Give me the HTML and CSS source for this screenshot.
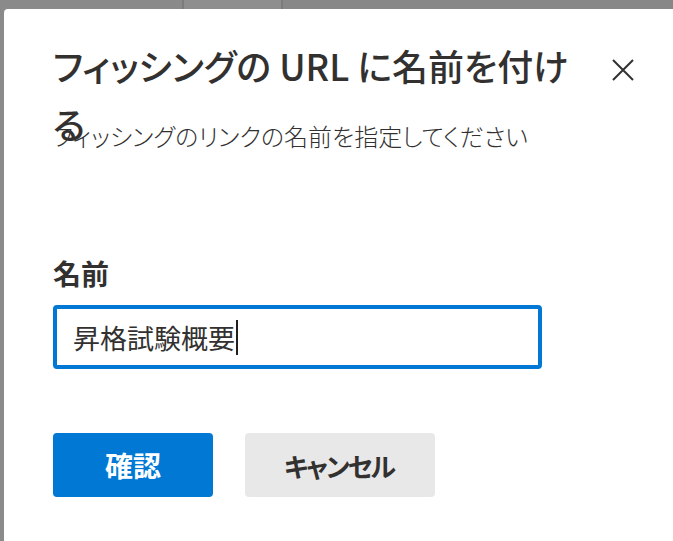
FILE: index.html
```html
<!DOCTYPE html>
<html lang="ja">
<head>
<meta charset="utf-8">
<title>フィッシングの URL に名前を付ける</title>
<link rel="stylesheet" href="styles.css">
</head>
<body>
<div class="topbar">
  <div class="seg seg1"></div>
  <div class="seg seg2"></div>
  <div class="seg seg3"></div>
</div>
<div class="dialog">
  <div class="header">
    <h1 class="title">フィッシングの URL に名前を付ける</h1>
    <button class="close" aria-label="閉じる">
      <svg width="22" height="22" viewBox="0 0 22 22"><path d="M1 1 L21 21 M21 1 L1 21" stroke="#323130" stroke-width="2" fill="none"/></svg>
    </button>
  </div>
  <p class="subtitle">フィッシングのリンクの名前を指定してください</p>
  <label class="label">名前</label>
  <div class="input"><span class="value">昇格試験概要</span><span class="caret"></span></div>
  <div class="actions">
    <button class="btn primary">確認</button>
    <button class="btn secondary">キャンセル</button>
  </div>
</div>
</body>
</html>
```

FILE: styles.css
```css
html, body {
  margin: 0;
  height: 100%;
  overflow: hidden;
}
body {
  background: #8a8a8a;
  font-family: "Noto Sans CJK JP", "Noto Sans", sans-serif;
  font-feature-settings: "palt";
  color: #323130;
}
.topbar {
  display: flex;
  height: 9px;
}
.seg1 {
  width: 182px;
  border-right: 2px solid #7b7b7b;
}
.seg2 {
  width: 97px;
  background: #8e8e8e;
  border-right: 2px solid #7b7b7b;
}
.seg3 {
  flex: 1;
  background: #878787;
}
.dialog {
  margin-left: 4px;
  height: calc(100% - 9px);
  box-sizing: border-box;
  background: #fff;
  border-top-left-radius: 4px;
  padding: 27px 0 0 49px;
}
.header {
  display: flex;
  justify-content: space-between;
  align-items: flex-start;
  padding-right: 28px;
}
.title {
  margin: 0;
  width: 528px;
  height: 58px;
  font-size: 36px;
  line-height: 58px;
  font-weight: 500;
}
.close {
  margin-top: 12px;
  width: 44px;
  height: 44px;
  padding: 0;
  border: 0;
  background: transparent;
  display: flex;
  align-items: center;
  justify-content: center;
}
.subtitle {
  margin: 24px 0 0;
  font-size: 24px;
  line-height: 36px;
  font-weight: 300;
}
.label {
  display: block;
  margin-top: 99px;
  font-size: 28px;
  line-height: 40px;
  font-weight: 700;
}
.input {
  margin-top: 12px;
  width: 489px;
  height: 64px;
  box-sizing: border-box;
  border: 4px solid #0078d4;
  border-radius: 4px;
  padding: 0 16px;
  display: flex;
  align-items: center;
  font-size: 27px;
}
.caret {
  width: 2px;
  height: 35px;
  margin-left: 1px;
  background: #201f1e;
}
.actions {
  display: flex;
  gap: 32px;
  margin-top: 64px;
}
.btn {
  height: 64px;
  border: 0;
  border-radius: 4px;
  font-family: inherit;
  font-feature-settings: "palt";
  font-size: 28px;
  font-weight: 700;
  padding: 0;
}
.primary {
  width: 160px;
  background: #0078d4;
  color: #fff;
}
.secondary {
  width: 190px;
  background: #e8e8e8;
  color: #323130;
  font-size: 26px;
  letter-spacing: -2px;
  text-indent: -2px;
}
```
